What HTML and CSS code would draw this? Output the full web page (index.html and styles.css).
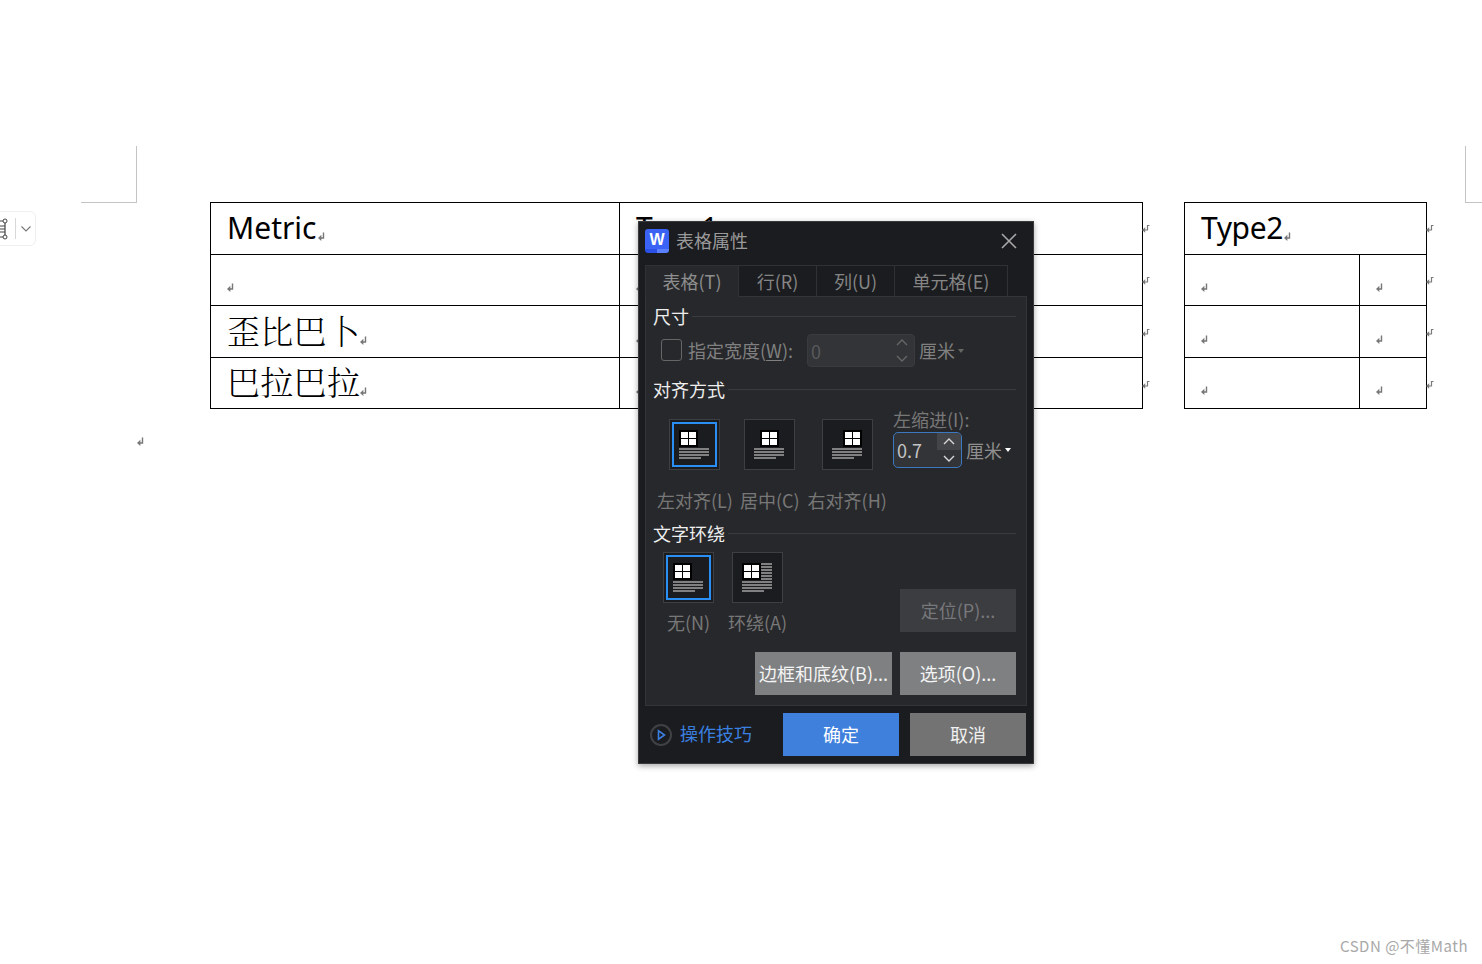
FILE: index.html
```html
<!DOCTYPE html>
<html lang="zh-CN">
<head>
<meta charset="utf-8">
<title>表格属性</title>
<link rel="stylesheet" href="styles.css">
</head>
<body>
<svg class="defs" width="0" height="0" aria-hidden="true">
  <symbol id="ret" viewBox="0 0 7 9"><path d="M5.5 0.5v5.5H2.5" fill="none" stroke="#777" stroke-width="1.4"/><path d="M0 6l3.4-3.2v6.2z" fill="#777"/></symbol>
  <symbol id="ret-end" viewBox="0 0 8 8"><path d="M7.5 0.5H5.5v4.5H2.5" fill="none" stroke="#7a7a7a" stroke-width="1.2"/><path d="M0 5l3.2-2.8v5.6z" fill="#7a7a7a"/></symbol>
  <symbol id="up" viewBox="0 0 12 7"><path d="M1 6l5-5 5 5" fill="none" stroke="currentColor" stroke-width="1.4"/></symbol>
  <symbol id="down" viewBox="0 0 12 7"><path d="M1 1l5 5 5-5" fill="none" stroke="currentColor" stroke-width="1.4"/></symbol>
</svg>

<main class="doc">
  <div class="crops"><div class="crop crop-left"></div><div class="crop crop-right"></div></div>
  <div class="tables">
    <div class="table-wrap">
      <table class="sheet sheet-one">
        <colgroup><col class="c-metric"><col class="c-type"></colgroup>
        <tr class="r1"><td class="head metric">Metric<svg class="ret"><use href="#ret"/></svg></td><td class="head">Type1<svg class="ret"><use href="#ret"/></svg></td></tr>
        <tr class="r2"><td class="empty"><svg class="ret"><use href="#ret"/></svg></td><td class="empty"><svg class="ret"><use href="#ret"/></svg></td></tr>
        <tr class="r3"><td class="cjk">歪比巴卜<svg class="ret"><use href="#ret"/></svg></td><td class="empty"><svg class="ret"><use href="#ret"/></svg></td></tr>
        <tr class="r4"><td class="cjk">巴拉巴拉<svg class="ret"><use href="#ret"/></svg></td><td class="empty"><svg class="ret"><use href="#ret"/></svg></td></tr>
      </table>
      <div class="eor"><svg class="ret-end"><use href="#ret-end"/></svg><svg class="ret-end"><use href="#ret-end"/></svg><svg class="ret-end"><use href="#ret-end"/></svg><svg class="ret-end"><use href="#ret-end"/></svg></div>
    </div>
    <div class="table-wrap">
      <table class="sheet sheet-two">
        <colgroup><col class="c-a"><col class="c-b"></colgroup>
        <tr class="r1"><td class="head" colspan="2">Type2<svg class="ret"><use href="#ret"/></svg></td></tr>
        <tr class="r2"><td class="empty"><svg class="ret"><use href="#ret"/></svg></td><td class="empty"><svg class="ret"><use href="#ret"/></svg></td></tr>
        <tr class="r3"><td class="empty"><svg class="ret"><use href="#ret"/></svg></td><td class="empty"><svg class="ret"><use href="#ret"/></svg></td></tr>
        <tr class="r4"><td class="empty"><svg class="ret"><use href="#ret"/></svg></td><td class="empty"><svg class="ret"><use href="#ret"/></svg></td></tr>
      </table>
      <div class="eor"><svg class="ret-end"><use href="#ret-end"/></svg><svg class="ret-end"><use href="#ret-end"/></svg><svg class="ret-end"><use href="#ret-end"/></svg><svg class="ret-end"><use href="#ret-end"/></svg></div>
    </div>
  </div>
  <div class="after-table"><svg class="ret"><use href="#ret"/></svg></div>
</main>

<div class="float-bar">
  <svg class="float-icon" width="24" height="24" viewBox="0 0 24 24"><path d="M6 4H21V20H6" fill="none" stroke="#444" stroke-width="1.2"/><path d="M10 9h11M10 12h11M10 15h11" stroke="#444"/><circle cx="21" cy="4" r="2" fill="#fff" stroke="#444"/><circle cx="21" cy="20" r="2" fill="#fff" stroke="#444"/></svg>
  <span class="float-sep"></span>
  <svg class="float-chev" width="10" height="6" viewBox="0 0 10 6"><path d="M0.5 0.5L5 5l4.5-4.5" fill="none" stroke="#777" stroke-width="1.1"/></svg>
</div>

<section class="dialog">
  <header class="title-bar">
    <span class="logo">W</span>
    <span class="title">表格属性</span>
    <svg class="close" width="16" height="16" viewBox="0 0 16 16"><path d="M1 1l14 14M15 1L1 15" stroke="#a8a8a8" stroke-width="1.6"/></svg>
  </header>
  <nav class="tabs">
    <span class="tab tab-on t1">表格(T)</span>
    <span class="tab t2">行(R)</span>
    <span class="tab t3">列(U)</span>
    <span class="tab t4">单元格(E)</span>
  </nav>
  <div class="panel">
    <div class="sec-head first"><span>尺寸</span><i></i></div>
    <div class="size-row">
      <span class="check"></span>
      <span class="lbl size-lbl">指定宽度(<u>W</u>):</span>
      <span class="num-off">0
        <span class="spin-off"><svg class="chev"><use href="#up"/></svg><svg class="chev"><use href="#down"/></svg></span>
      </span>
      <span class="lbl unit">厘米</span><span class="caret caret-dim"></span>
    </div>

    <div class="sec-head second"><span>对齐方式</span><i></i></div>
    <div class="align-row">
      <div class="options">
        <div class="option">
          <div class="pick pick-on"><span class="glyph"><span class="win"><b></b><b></b><b></b><b></b></span><span class="lines"><em></em><em></em><em></em><em class="short"></em></span></span></div>
          <span class="lbl">左对齐(L)</span>
        </div>
        <div class="option">
          <div class="pick"><span class="glyph gl-center"><span class="win"><b></b><b></b><b></b><b></b></span><span class="lines"><em></em><em></em><em></em><em class="short"></em></span></span></div>
          <span class="lbl">居中(C)</span>
        </div>
        <div class="option option-right">
          <div class="pick"><span class="glyph gl-right"><span class="win"><b></b><b></b><b></b><b></b></span><span class="lines"><em></em><em></em><em></em><em class="short"></em></span></span></div>
          <span class="lbl">右对齐(H)</span>
        </div>
      </div>
      <div class="indent">
        <span class="lbl">左缩进(I):</span>
        <div class="indent-row">
          <span class="num-on">0.7
            <span class="spin-on"><span class="spin-btn hot"><svg class="chev"><use href="#up"/></svg></span><span class="spin-btn"><svg class="chev"><use href="#down"/></svg></span></span>
          </span>
          <span class="lbl unit-on">厘米</span><span class="caret"></span>
        </div>
      </div>
    </div>

    <div class="sec-head third"><span>文字环绕</span><i></i></div>
    <div class="wrap-row">
      <div class="options wrap-options">
        <div class="option">
          <div class="pick pick-on"><span class="glyph"><span class="win"><b></b><b></b><b></b><b></b></span><span class="lines"><em></em><em></em><em></em><em class="short"></em></span></span></div>
          <span class="lbl">无(N)</span>
        </div>
        <div class="option">
          <div class="pick"><span class="glyph"><span class="top-wrap"><span class="win"><b></b><b></b><b></b><b></b></span><span class="side"><em></em><em></em><em></em><em></em><em></em><em></em></span></span><span class="lines"><em></em><em></em><em></em><em class="short"></em></span></span></div>
          <span class="lbl">环绕(A)</span>
        </div>
      </div>
      <button class="btn btn-off pos-btn" type="button">定位(P)...</button>
    </div>
    <div class="btn-row">
      <button class="btn btn-grey border-btn" type="button">边框和底纹(B)...</button>
      <button class="btn btn-grey opt-btn" type="button">选项(O)...</button>
    </div>
  </div>
  <footer class="foot">
    <svg class="tip-icon" width="22" height="22" viewBox="0 0 22 22"><circle cx="11" cy="11" r="10" fill="none" stroke="#3f4145" stroke-width="2"/><path d="M8.5 6.8v8.4l6-4.2z" fill="none" stroke="#3a7fe0" stroke-width="1.6"/></svg>
    <span class="tip">操作技巧</span>
    <button class="btn btn-ok" type="button">确定</button>
    <button class="btn btn-cancel" type="button">取消</button>
  </footer>
</section>

<div class="mark">CSDN @不懂Math</div>
</body>
</html>
```
FILE: styles.css
```css
* { box-sizing: border-box; }
html, body { margin: 0; height: 100%; background: #fff; overflow: hidden; }
body { font-family: "Noto Sans CJK SC", "Noto Sans", sans-serif; }
.defs { position: absolute; }
.ret { width: 7px; height: 9px; display: inline-block; }
.ret-end { width: 8px; height: 8px; display: block; flex: none; }

.doc { padding-top: 146px; }
.crops { display: flex; justify-content: space-between; height: 57px; padding-left: 81px; }
.crop { height: 57px; border-bottom: 1px solid #c4c4c4; }
.crop-left { width: 56px; border-right: 1px solid #c4c4c4; }
.crop-right { width: 17px; border-left: 1px solid #c4c4c4; }

.tables { display: flex; margin: -1px 0 0 210px; gap: 34px; }
.table-wrap { display: flex; align-items: flex-start; }
.sheet { border-collapse: collapse; table-layout: fixed; background: #fff; }
.sheet-one { width: 933px; }
.sheet-two { width: 243px; }
.c-metric { width: 409px; }
.c-a { width: 175px; }
.sheet td { border: 1px solid #000; padding: 0 0 0 16px; white-space: nowrap; line-height: 1; }
.r1 { height: 52px; } .r2 { height: 51px; } .r3 { height: 52px; } .r4 { height: 51px; }
.sheet .head { font-family: "Noto Sans", sans-serif; font-size: 30px; color: #000; vertical-align: middle; letter-spacing: -0.4px; padding-bottom: 2px; }
.sheet .metric { letter-spacing: 0; }
.sheet .head .ret { margin-left: 1px; vertical-align: -2px; }
.sheet .cjk { font-family: "Noto Serif CJK SC", "Noto Sans CJK SC", serif; font-size: 33px; color: #000; font-weight: 300; vertical-align: middle; padding-bottom: 5px; letter-spacing: .3px; }
.sheet .cjk .ret { vertical-align: -1px; }
.sheet .empty { vertical-align: bottom; padding-bottom: 12px; }
.eor { display: flex; flex-direction: column; gap: 44px; width: 7px; padding-top: 23px; margin-left: -1px; margin-right: 1px; }
.after-table { padding: 18px 0 0 137px; }

.float-bar { position: absolute; left: -20px; top: 211px; width: 56px; height: 35px; border: 1px solid #efefef; border-radius: 6px; background: #fff; display: flex; align-items: center; }
.float-icon { margin-left: 3px; flex: none; }
.float-sep { width: 1px; height: 21px; background: #d8d8d8; margin-left: 7px; margin-right: 5px; flex: none; }
.float-chev { display: block; flex: none; }

.dialog { position: absolute; left: 638px; top: 221px; width: 396px; height: 543px; background: #1b1c1f; border: 1px solid #3a3a3c; box-shadow: 0 2px 6px rgba(0,0,0,.35); display: flex; flex-direction: column; font-size: 18px; line-height: 24px; }
.title-bar { display: flex; align-items: center; height: 43px; padding: 0 16px 6px 6px; flex: none; }
.logo { width: 24px; height: 24px; border-radius: 3px; background: linear-gradient(to right, #2a50e6 50%, #5a80ff 50%) bottom/100% 4px no-repeat, #3a63f5; color: #fff; font: 700 16px/22px "Liberation Sans", sans-serif; text-align: center; }
.title { margin-left: 7px; color: #9a9a9a; padding-bottom: 2px; }
.close { margin-left: auto; }

.tabs { display: flex; height: 32px; padding-left: 6px; flex: none; }
.tab { display: flex; align-items: center; justify-content: center; color: #858585; border: 1px solid #303134; border-width: 1px 1px 0 0; background: #1b1c1f; padding-bottom: 2px; }
.tab-on { background: #27282b; color: #8e8e8e; border-left-width: 1px; position: relative; z-index: 1; height: 32px; }
.t1 { width: 94px; } .t2 { width: 78px; } .t3 { width: 78px; } .t4 { width: 113px; }

.panel { width: 382px; height: 410px; margin-left: 6px; margin-top: -1px; padding: 0 10px 0 7px; background: #27282b; border: 1px solid #333437; flex: none; }

.sec-head { display: flex; align-items: center; gap: 3px; color: #eee; height: 24px; }
.sec-head span { padding-bottom: 2px; }
.sec-head i { flex: 1; height: 1px; background: #3a3b3e; margin-top: -2px; }
.first { margin-top: 8px; }
.second { margin-top: 11px; }
.third { margin-top: 10px; }
.lbl { color: #777; white-space: nowrap; padding-bottom: 2px; }

.size-row { display: flex; align-items: center; height: 33px; margin-top: 5px; padding-left: 8px; }
.check { width: 21px; height: 22px; border: 1px solid #666; border-radius: 3px; margin-right: 6px; margin-top: -2px; }
.size-lbl { color: #808080; }
.size-lbl u { text-underline-offset: 2px; }
.num-off { width: 108px; height: 33px; margin-left: 14px; background: #333437; border: 1px solid #3a3b3e; border-radius: 4px; color: #58595c; display: flex; align-items: center; padding-left: 3px; justify-content: space-between; }
.spin-off { display: flex; flex-direction: column; gap: 9px; color: #666; padding-right: 6px; }
.chev { width: 12px; height: 7px; display: block; }
.unit { margin-left: 4px; color: #808080; }
.caret { width: 0; height: 0; border: 3.5px solid transparent; border-top: 4px solid #fff; border-bottom: 0; margin-left: 3px; }
.caret-dim { border-top-color: #666; }

.align-row { display: flex; height: 105px; margin-top: 5px; }
.options { display: flex; gap: 7px; padding-left: 4px; padding-top: 12px; }
.option { display: flex; flex-direction: column; align-items: center; }
.option .lbl { margin-top: 18px; }
.option-right { margin-left: 1px; }
.pick { width: 51px; height: 51px; background: #1b1c1f; border: 1px solid #3e3f42; position: relative; display: flex; flex: none; }
.pick-on::after { content: ""; position: absolute; inset: 2px; border: 2px solid #2a8ff5; }
.glyph { width: 30px; margin: 10px 0 0 9px; display: flex; flex-direction: column; }
.gl-center { align-items: center; }
.gl-right { align-items: flex-end; }
.win { width: 19px; height: 17px; background: #000; padding: 2px; display: grid; grid-template-columns: 7px 7px; grid-template-rows: 6px 6px; gap: 1px; flex: none; }
.win b { background: #fff; }
.lines { width: 30px; display: flex; flex-direction: column; gap: 1px; margin-top: 1px; }
.lines em, .side em { height: 2px; background: #808080; display: block; }
.lines .short { width: 22px; }
.top-wrap { display: flex; width: 30px; }
.side { width: 11px; display: flex; flex-direction: column; gap: 1px; }
.indent { margin-left: auto; width: 123px; }
.indent .lbl { display: block; padding-bottom: 0; line-height: 24px; }
.indent-row { display: flex; align-items: center; margin-top: 1px; }
.num-on { width: 69px; height: 36px; border: 1px solid #3a78c0; border-radius: 5px; background: #333437; color: #c4c4c4; padding-left: 3px; display: flex; align-items: center; justify-content: space-between; overflow: hidden; flex: none; }
.spin-on { width: 24px; display: flex; flex-direction: column; color: #d8d8d8; align-self: stretch; }
.spin-btn { height: 17px; display: flex; align-items: center; justify-content: center; }
.spin-btn.hot { background: #444548; }
.unit-on { margin-left: 4px; color: #8f8f8f; }

.wrap-row { display: flex; align-items: flex-start; height: 86px; margin-top: 6px; }
.wrap-options { padding: 0 0 0 10px; gap: 14px; }
.wrap-options .option .lbl { margin-top: 7px; }
.btn { border: 0; padding: 0 0 2px; font: inherit; cursor: default; white-space: nowrap; }
.pos-btn { margin: 37px 0 0 auto; width: 116px; height: 43px; }
.btn-off { background: #3c3d40; color: #77787b; }
.btn-grey { background: #7f8082; color: #f4f4f4; height: 43px; }
.btn-row { display: flex; justify-content: flex-end; gap: 8px; margin-top: 14px; }
.border-btn { width: 137px; }
.opt-btn { width: 116px; }

.foot { display: flex; align-items: center; height: 58px; padding: 0 7px 0 11px; background: #1b1c1f; flex: 1; }
.tip { color: #3a80e0; margin-left: 8px; padding-bottom: 3px; }
.btn-ok { margin-left: auto; width: 116px; height: 43px; background: #4080dd; color: #fff; }
.btn-cancel { margin-left: 11px; width: 116px; height: 43px; background: #737373; color: #f0f0f0; }

.mark { position: absolute; right: 14px; bottom: 8px; font-size: 15px; line-height: 20px; color: #a8a8a8; letter-spacing: .5px; }
```
